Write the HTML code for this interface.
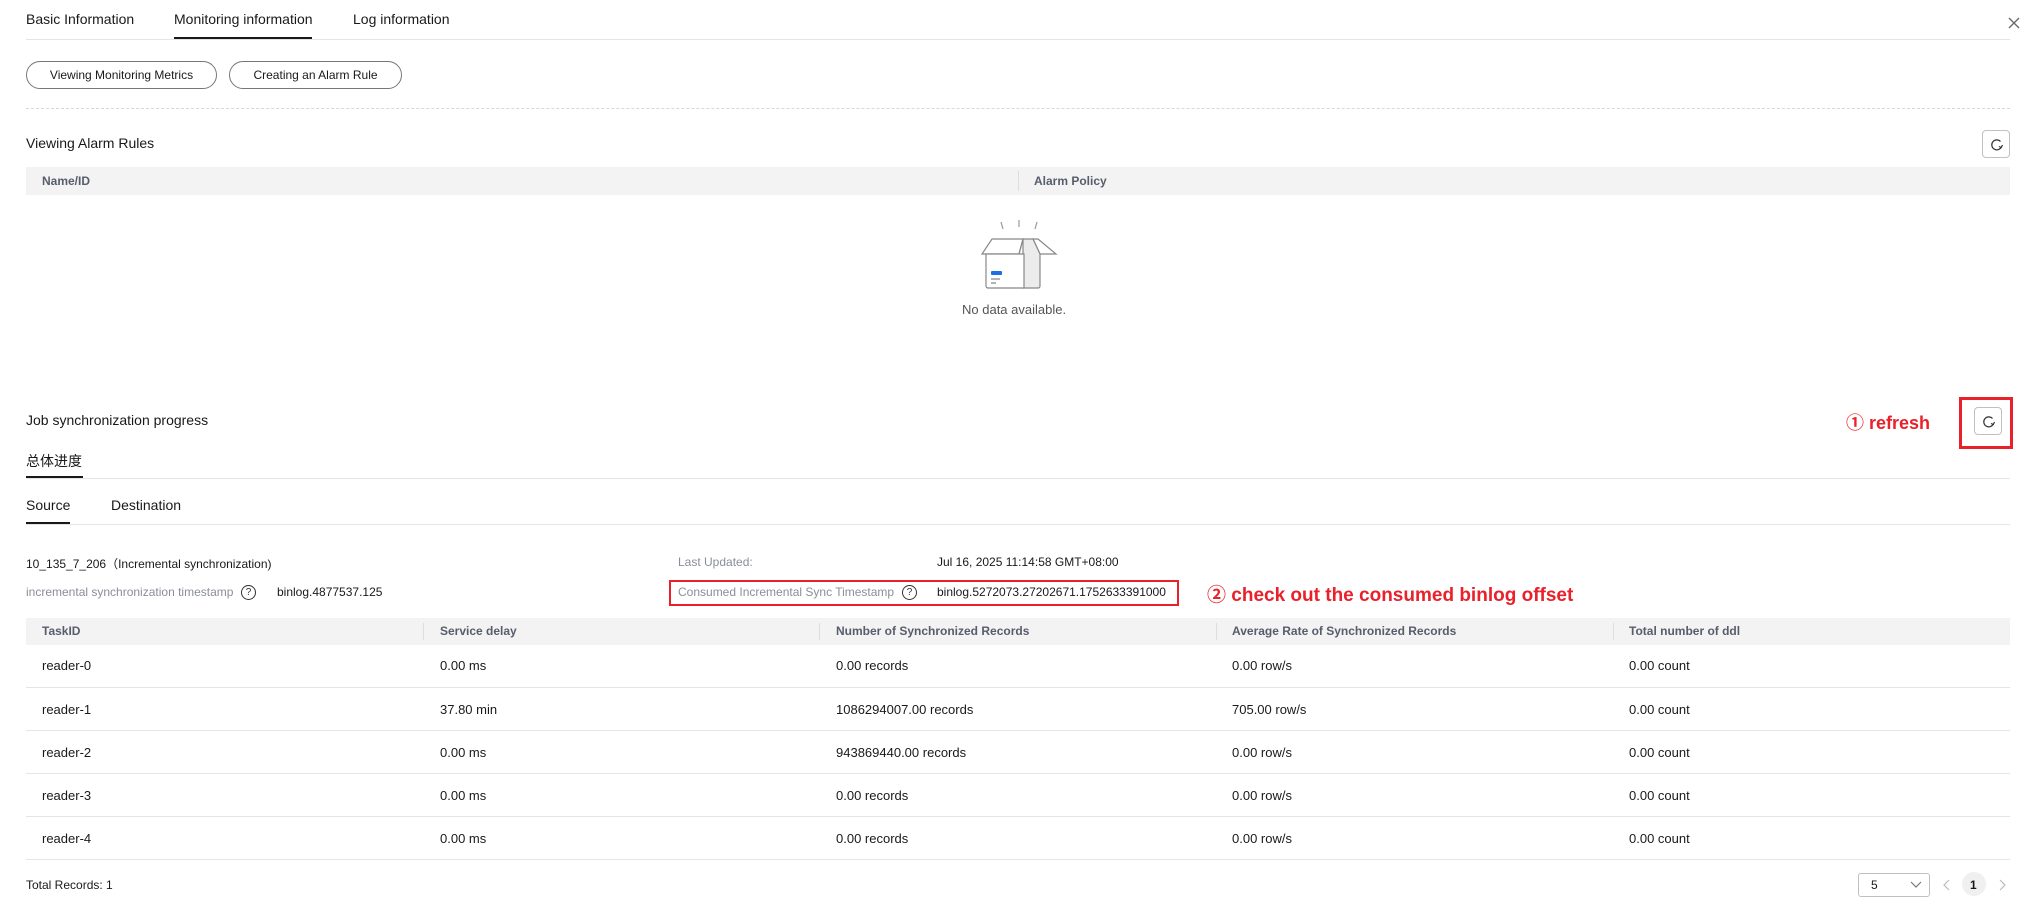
<!DOCTYPE html>
<html><head><meta charset="utf-8"><style>
*{margin:0;padding:0;box-sizing:border-box}
body{width:2041px;height:918px;background:#fff;font-family:"Liberation Sans","Noto Sans CJK SC",sans-serif;color:#191919;font-size:13px;position:relative;overflow:hidden}
.a{position:absolute;white-space:nowrap}
.s{font-size:12px}
.t{font-size:13px}
.hl{position:absolute;height:1px;background:#e5e5e5}
.btn{position:absolute;border:1px solid #777;border-radius:15px;height:28px;line-height:26px;text-align:center;font-size:12px;color:#191919}
.rb{position:absolute;width:28px;height:28px;border:1px solid #c0c0c0;border-radius:4px}
.rb svg{position:absolute;left:6px;top:6px}
.th{position:absolute;top:618px;height:27px;line-height:27px;color:#575d6c;font-weight:bold;font-size:12px}
.q{display:inline-block;width:15px;height:15px;border:1px solid #333;border-radius:50%;font-size:10px;line-height:13px;text-align:center;color:#333;vertical-align:middle}
.red{color:#e8212b;font-weight:bold;font-size:19px}
</style></head><body>
<div class="a" style="left:26px;top:11px;font-size:14px">Basic Information</div>
<div class="a" style="left:174px;top:11px;font-size:14px">Monitoring information</div>
<div class="a" style="left:353px;top:11px;font-size:14px">Log information</div>
<div class="hl" style="left:26px;top:39px;width:1984px"></div>
<div style="position:absolute;left:174px;top:37px;width:138px;height:2px;background:#191919"></div>
<svg class="a" style="left:2008px;top:17px" width="12" height="12"><path d="M1 1L11 11M11 1L1 11" stroke="#666" stroke-width="1.3"/></svg>

<div class="btn" style="left:26px;top:61px;width:191px">Viewing Monitoring Metrics</div>
<div class="btn" style="left:229px;top:61px;width:173px">Creating an Alarm Rule</div>
<div style="position:absolute;left:26px;top:108px;width:1984px;border-top:1px dashed #d8d8d8"></div>

<div class="a" style="left:26px;top:135px;font-size:14px">Viewing Alarm Rules</div>
<div class="rb" style="left:1982px;top:130px"><svg width="16" height="16"><path d="M12.3 10A5 5 0 1 1 11.5 4.5" fill="none" stroke="#333" stroke-width="1.2"/><path d="M10 9.5L12.3 10.5L13.5 8" fill="none" stroke="#333" stroke-width="1.2"/></svg></div>
<div style="position:absolute;left:26px;top:167px;width:1984px;height:28px;background:#f3f3f3"></div>
<div class="th" style="left:42px;top:167px;height:28px;line-height:28px">Name/ID</div>
<div style="position:absolute;left:1018px;top:171px;width:1px;height:20px;background:#ddd"></div>
<div class="th" style="left:1034px;top:167px;height:28px;line-height:28px">Alarm Policy</div>

<svg class="a" style="left:978px;top:220px" width="82" height="72">
<path d="M23 2l2 7M41 0v7M59 2l-2 7" stroke="#999" stroke-width="1.2"/>
<path d="M14 19h31l-4 15H4z" fill="#fff" stroke="#888" stroke-width="1.2"/>
<path d="M55 19h5l18 15h-16z" fill="#fff" stroke="#888" stroke-width="1.2"/>
<path d="M45 19h10l7 15v32a2 2 0 0 1-2 2H45z" fill="#ececec" stroke="#888" stroke-width="1.2"/>
<path d="M8 34v32a2 2 0 0 0 2 2h36V34z" fill="#fff" stroke="#888" stroke-width="1.2"/>
<path d="M45 19l-4 15" stroke="#888" stroke-width="1.2"/>
<rect x="13" y="51" width="11" height="4" rx="1" fill="#1e6ee8"/>
<path d="M13 59h9M13 63h5" stroke="#888" stroke-width="1.2"/>
</svg>
<div class="a" style="left:962px;top:302px;color:#555;font-size:13px">No data available.</div>

<div class="a" style="left:26px;top:412px;font-size:14px">Job synchronization progress</div>
<div class="a red" style="left:1846px;top:409px;font-size:18px">① refresh</div>
<div style="position:absolute;left:1959px;top:397px;width:54px;height:52px;border:3px solid #e8212b"></div>
<div class="rb" style="left:1974px;top:407px"><svg width="16" height="16"><path d="M12.3 10A5 5 0 1 1 11.5 4.5" fill="none" stroke="#333" stroke-width="1.2"/><path d="M10 9.5L12.3 10.5L13.5 8" fill="none" stroke="#333" stroke-width="1.2"/></svg></div>

<div class="a" style="left:26px;top:451px;font-size:14px">总体进度</div>
<div class="hl" style="left:26px;top:478px;width:1984px"></div>
<div style="position:absolute;left:26px;top:476px;width:57px;height:2px;background:#191919"></div>
<div class="a" style="left:26px;top:497px;font-size:14px">Source</div>
<div class="a" style="left:111px;top:497px;font-size:14px">Destination</div>
<div class="hl" style="left:26px;top:524px;width:1984px"></div>
<div style="position:absolute;left:26px;top:522px;width:44px;height:2px;background:#191919"></div>

<div class="a s" style="left:26px;top:555px">10_135_7_206（Incremental synchronization)</div>
<div class="a s" style="left:678px;top:555px;color:#8a8e99">Last Updated:</div>
<div class="a s" style="left:937px;top:555px">Jul 16, 2025 11:14:58 GMT+08:00</div>
<div class="a s" style="left:26px;top:585px;color:#8a8e99">incremental synchronization timestamp</div>
<div class="a" style="left:241px;top:584px"><span class="q">?</span></div>
<div class="a s" style="left:277px;top:585px">binlog.4877537.125</div>
<div class="a s" style="left:678px;top:585px;color:#8a8e99">Consumed Incremental Sync Timestamp</div>
<div class="a" style="left:902px;top:584px"><span class="q">?</span></div>
<div class="a s" style="left:937px;top:585px">binlog.5272073.27202671.1752633391000</div>
<div style="position:absolute;left:669px;top:580px;width:510px;height:26px;border:2px solid #e8212b"></div>
<div class="a red" style="left:1207px;top:580px">② check out the consumed binlog offset</div>

<div style="position:absolute;left:26px;top:618px;width:1984px;height:27px;background:#f3f3f3"></div>
<div class="th" style="left:42px">TaskID</div>
<div class="th" style="left:440px">Service delay</div>
<div class="th" style="left:836px">Number of Synchronized Records</div>
<div class="th" style="left:1232px">Average Rate of Synchronized Records</div>
<div class="th" style="left:1629px">Total number of ddl</div>
<div style="position:absolute;left:423px;top:623px;width:1px;height:17px;background:#ddd"></div>
<div style="position:absolute;left:819px;top:623px;width:1px;height:17px;background:#ddd"></div>
<div style="position:absolute;left:1216px;top:623px;width:1px;height:17px;background:#ddd"></div>
<div style="position:absolute;left:1613px;top:623px;width:1px;height:17px;background:#ddd"></div>

<div class="a t" style="left:42px;top:658px">reader-0</div><div class="a t" style="left:440px;top:658px">0.00 ms</div><div class="a t" style="left:836px;top:658px">0.00 records</div><div class="a t" style="left:1232px;top:658px">0.00 row/s</div><div class="a t" style="left:1629px;top:658px">0.00 count</div>
<div class="hl" style="left:26px;top:687px;width:1984px"></div>
<div class="a t" style="left:42px;top:702px">reader-1</div><div class="a t" style="left:440px;top:702px">37.80 min</div><div class="a t" style="left:836px;top:702px">1086294007.00 records</div><div class="a t" style="left:1232px;top:702px">705.00 row/s</div><div class="a t" style="left:1629px;top:702px">0.00 count</div>
<div class="hl" style="left:26px;top:730px;width:1984px"></div>
<div class="a t" style="left:42px;top:745px">reader-2</div><div class="a t" style="left:440px;top:745px">0.00 ms</div><div class="a t" style="left:836px;top:745px">943869440.00 records</div><div class="a t" style="left:1232px;top:745px">0.00 row/s</div><div class="a t" style="left:1629px;top:745px">0.00 count</div>
<div class="hl" style="left:26px;top:773px;width:1984px"></div>
<div class="a t" style="left:42px;top:788px">reader-3</div><div class="a t" style="left:440px;top:788px">0.00 ms</div><div class="a t" style="left:836px;top:788px">0.00 records</div><div class="a t" style="left:1232px;top:788px">0.00 row/s</div><div class="a t" style="left:1629px;top:788px">0.00 count</div>
<div class="hl" style="left:26px;top:816px;width:1984px"></div>
<div class="a t" style="left:42px;top:831px">reader-4</div><div class="a t" style="left:440px;top:831px">0.00 ms</div><div class="a t" style="left:836px;top:831px">0.00 records</div><div class="a t" style="left:1232px;top:831px">0.00 row/s</div><div class="a t" style="left:1629px;top:831px">0.00 count</div>
<div class="hl" style="left:26px;top:859px;width:1984px"></div>

<div class="a s" style="left:26px;top:878px">Total Records: 1</div>
<div style="position:absolute;left:1858px;top:873px;width:72px;height:24px;border:1px solid #c0c0c0;border-radius:3px"></div>
<div class="a s" style="left:1871px;top:878px">5</div>
<svg class="a" style="left:1910px;top:881px" width="12" height="8"><path d="M1 1l5 5 5-5" fill="none" stroke="#777" stroke-width="1.2"/></svg>
<svg class="a" style="left:1943px;top:879px" width="8" height="12"><path d="M6 1L1 6l5 5" fill="none" stroke="#bbb" stroke-width="1.2"/></svg>
<div style="position:absolute;left:1962px;top:872px;width:24px;height:24px;border-radius:50%;background:#f0f0f0"></div>
<div class="a s" style="left:1970px;top:878px;font-weight:bold">1</div>
<svg class="a" style="left:1998px;top:879px" width="8" height="12"><path d="M2 1l5 5-5 5" fill="none" stroke="#bbb" stroke-width="1.2"/></svg>
</body></html>
